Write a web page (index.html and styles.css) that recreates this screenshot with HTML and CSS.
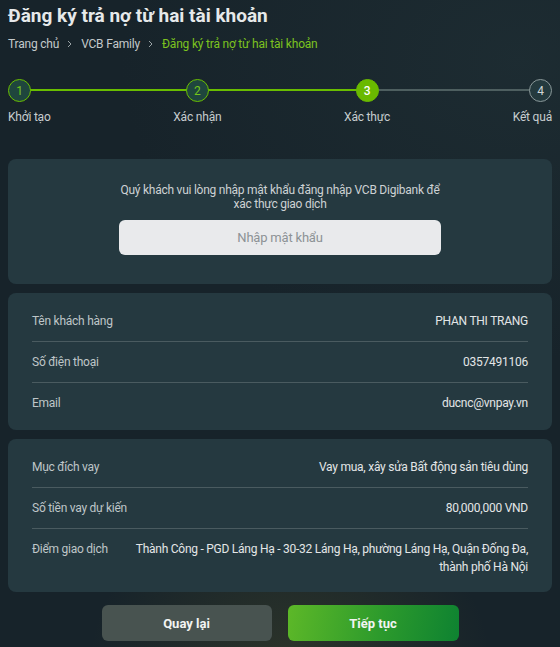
FILE: index.html
```html
<!DOCTYPE html>
<html lang="vi">
<head>
<meta charset="utf-8">
<title>Đăng ký trả nợ từ hai tài khoản</title>
<link rel="stylesheet" href="styles.css">
</head>
<body>
<div class="page">
  <h1 class="title">Đăng ký trả nợ từ hai tài khoản</h1>
  <nav class="crumbs">
    <span class="crumb">Trang chủ</span>
    <svg class="chev" width="5" height="8" viewBox="0 0 5 8"><path d="M1 1l3 3-3 3" fill="none" stroke="#9aa3a6" stroke-width="1"/></svg>
    <span class="crumb">VCB Family</span>
    <svg class="chev" width="5" height="8" viewBox="0 0 5 8"><path d="M1 1l3 3-3 3" fill="none" stroke="#9aa3a6" stroke-width="1"/></svg>
    <span class="crumb current">Đăng ký trả nợ từ hai tài khoản</span>
  </nav>

  <div class="stepper">
    <div class="step first done"><span class="dot">1</span><span class="label">Khởi tạo</span></div>
    <div class="step done"><span class="dot">2</span><span class="label">Xác nhận</span></div>
    <div class="step active"><span class="dot">3</span><span class="label">Xác thực</span></div>
    <div class="step last todo"><span class="dot">4</span><span class="label">Kết quả</span></div>
  </div>

  <section class="card auth">
    <p class="auth-text">Quý khách vui lòng nhập mật khẩu đăng nhập VCB Digibank để xác thực giao dịch</p>
    <input class="pwd" type="password" placeholder="Nhập mật khẩu">
  </section>

  <section class="card info">
    <div class="row"><span class="k">Tên khách hàng</span><span class="v">PHAN THI TRANG</span></div>
    <div class="row"><span class="k">Số điện thoại</span><span class="v">0357491106</span></div>
    <div class="row"><span class="k">Email</span><span class="v">ducnc@vnpay.vn</span></div>
  </section>

  <section class="card info">
    <div class="row"><span class="k">Mục đích vay</span><span class="v">Vay mua, xây sửa Bất động sản tiêu dùng</span></div>
    <div class="row"><span class="k">Số tiền vay dự kiến</span><span class="v">80,000,000 VND</span></div>
    <div class="row"><span class="k">Điểm giao dịch</span><span class="v multi">Thành Công - PGD Láng Hạ - 30-32 Láng Hạ, phường Láng Hạ, Quận Đống Đa, thành phố Hà Nội</span></div>
  </section>

  <div class="actions">
    <button class="btn back">Quay lại</button>
    <button class="btn next">Tiếp tục</button>
  </div>
</div>
</body>
</html>
```

FILE: styles.css
```css
* { box-sizing: border-box; }
html, body { margin: 0; height: 100%; }
body {
  font-family: Roboto, "Noto Sans", Arial, sans-serif;
  color: #c9cfd1;
  background:
    radial-gradient(ellipse 200px 160px at 290px 660px, rgba(120, 112, 40, 0.22), rgba(120, 112, 40, 0) 100%),
    radial-gradient(ellipse 400px 300px at 520px 60px, rgba(40, 60, 64, 0.35), rgba(40, 60, 64, 0) 100%),
    #17232a;
  overflow: hidden;
}
.page { padding: 4px 8px 0; }
.title {
  margin: 0;
  font-size: 19px;
  line-height: 24px;
  font-weight: 700;
  color: #e6e9ea;
}
.crumbs {
  margin-top: 8px;
  display: flex;
  align-items: center;
  font-size: 12px;
  line-height: 16px;
  letter-spacing: -0.2px;
  color: #c3c9cb;
}
.chev { margin: 0 9px 0 8px; }
.crumb.current { color: #7cc31f; }

.stepper {
  position: relative;
  margin-top: 27px;
  display: flex;
  justify-content: space-between;
  letter-spacing: -0.2px;
}
.stepper::before {
  content: "";
  position: absolute;
  left: 12px;
  right: 12px;
  top: 10px;
  height: 2px;
  background: linear-gradient(to right, #69bd00 0, #69bd00 66%, #4e5f60 66%, #4e5f60 100%);
}
.step {
  position: relative;
  display: flex;
  flex-direction: column;
  align-items: center;
}
.step.first { align-items: flex-start; }
.step.last { align-items: flex-end; }
.dot {
  width: 23px;
  height: 23px;
  border-radius: 50%;
  display: flex;
  align-items: center;
  justify-content: center;
  font-size: 12px;
  border: 1.5px solid #6abf00;
  background: #1f463d;
  color: #74c51a;
}
.step.active .dot { background: #6ab900; border-color: #6ab900; color: #ffffff; font-weight: 500; }
.step.todo .dot { background: #243a3e; border-color: #8a9899; color: #d0d6d7; }
.label {
  margin-top: 7px;
  font-size: 12px;
  line-height: 16px;
  color: #c7cdcf;
}

.card {
  background: #253940;
  border-radius: 8px;
}
.auth {
  margin-top: 34px;
  height: 125px;
  padding-top: 24px;
  display: flex;
  flex-direction: column;
  align-items: center;
}
.auth-text {
  margin: 0;
  width: 322px;
  text-align: center;
  font-size: 12px;
  line-height: 14px;
  letter-spacing: -0.25px;
  color: #cdd2d4;
}
.pwd {
  margin-top: 9px;
  width: 322px;
  height: 35px;
  border: none;
  border-radius: 6px;
  background: #e9eaec;
  text-align: center;
  font-family: inherit;
  font-size: 13px;
  letter-spacing: -0.2px;
  outline: none;
}
.pwd::placeholder { color: #8d9296; }

.info {
  margin-top: 9px;
  padding: 8px 24px 7px;
}
.row {
  display: flex;
  justify-content: space-between;
  align-items: flex-start;
  padding: 12px 0;
  font-size: 12px;
  line-height: 16px;
  letter-spacing: -0.25px;
}
.row + .row { border-top: 1px solid #4a5b60; }
.k { flex-shrink: 0; color: #bfc6c8; }
.v {
  margin-left: 24px;
  text-align: right;
  color: #e3e6e7;
}
.v.multi { line-height: 18px; margin-top: -1px; margin-bottom: -3px; }

.actions {
  margin-top: 13px;
  display: flex;
  justify-content: center;
  gap: 16px;
}
.btn {
  width: 170px;
  height: 36px;
  border: none;
  border-radius: 6px;
  font-family: inherit;
  font-size: 13px;
  font-weight: 700;
  color: #f2f4f2;
}
.btn.back { background: #485350; }
.btn.next {
  width: 171px;
  background: linear-gradient(100deg, #5db828 0%, #2c9a2c 55%, #0e8231 100%);
}
```
